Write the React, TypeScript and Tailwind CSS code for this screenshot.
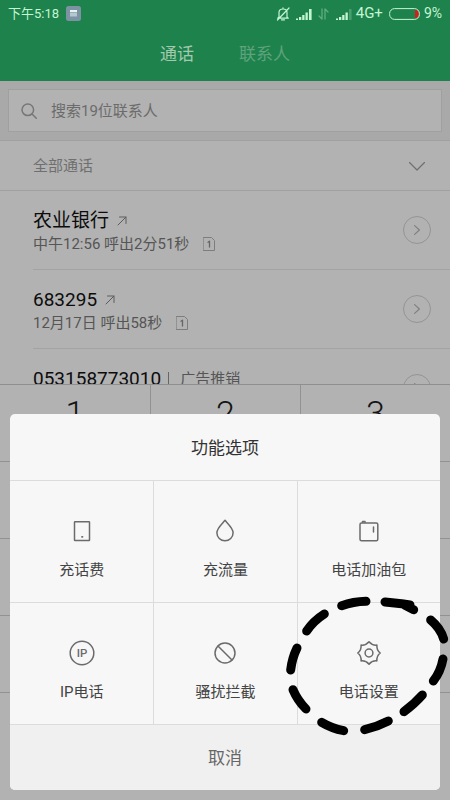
import React from "react";

const stroke = {
  fill: "none",
  stroke: "currentColor",
  strokeLinecap: "round" as const,
  strokeLinejoin: "round" as const,
};

function Signal({ dimLast }: { dimLast?: boolean }) {
  return (
    <svg className="h-[12px] w-[16px]" viewBox="0 0 16 12" fill="currentColor" aria-hidden="true">
      <path d="M0 10.500h2V12H0zM3 9h2.300v3H3zM6.200 7h2.300v5H6.200zM9.500 4.500h2.300V12H9.500z" />
      <path d="M13 1h2.600v11H13z" opacity={dimLast ? 0.25 : 1} />
    </svg>
  );
}

function StatusBar() {
  return (
    <div className="flex h-[27px] items-center px-2 text-[14px] text-[#c4f5d3]">
      <span className="text-[13px]">下午5:18</span>
      <svg className="ml-[7px] h-[15px] w-[15px]" viewBox="0 0 15 15" aria-hidden="true">
        <rect width="15" height="15" rx="2.500" fill="#7b93a2" />
        <path d="M4 4h7v2H4z" fill="#e6f3f3" />
        <path d="M4 6.500h7v4H4z" fill="#b5c8d0" />
      </svg>
      <div className="ml-auto flex items-center">
        <svg className="h-[14px] w-[14px]" viewBox="0 0 14 14" {...stroke} strokeWidth="1.200" aria-hidden="true">
          <path d="M3 10V5.500C3 3.500 4.500 2 7 2s4 1.500 4 3.500V10l1.300 1.200H1.700zM5.500 12.800h3M7 .8V2M13 1 1.500 13" />
        </svg>
        <span className="ml-[6px]"><Signal /></span>
        <svg className="ml-[6px] h-[12px] w-[11px] text-[#5fae7e]" viewBox="0 0 11 12" {...stroke} strokeWidth="1.300" aria-hidden="true">
          <path d="M4 1v10L1 8M7 11V1l3 3" />
        </svg>
        <span className="ml-[7px]"><Signal dimLast /></span>
        <span className="ml-[4px] text-[15px]">4G+</span>
        <svg className="ml-[6px] h-[12px] w-[31px]" viewBox="0 0 31 12" aria-hidden="true">
          <path d="M26 1.500c3 .5 4 2 4 4.500s-1 4-4 4.500z" fill="#d0201c" />
          <rect x=".6" y=".6" width="29.800" height="10.800" rx="5" fill="none" stroke="currentColor" strokeWidth="1" />
        </svg>
        <span className="ml-[4px]">9%</span>
      </div>
    </div>
  );
}

function ArrowOut() {
  return (
    <svg className="h-[10px] w-[10px] text-[#5c5c5c]" viewBox="0 0 10 10" {...stroke} strokeWidth="1" aria-hidden="true">
      <path d="M1 9 9 1M2.500 1H9v6.500" />
    </svg>
  );
}

function Sim() {
  return (
    <svg className="h-[14px] w-[12px] text-[#7d7d7d]" viewBox="0 0 12 14" {...stroke} strokeWidth="1" aria-hidden="true">
      <path d="M.5.5h8l3 3v10H.5z" />
      <path d="M5 5.200l1.500-1V10" stroke="#666" strokeWidth="1.300" />
    </svg>
  );
}

type Call = { name: string; tag?: string; info?: string };

const calls: Call[] = [
  { name: "农业银行", info: "中午12:56 呼出2分51秒" },
  { name: "683295", info: "12月17日 呼出58秒" },
  { name: "053158773010", tag: "广告推销" },
];

function CallRow({ name, tag, info }: Call) {
  return (
    <li className="ml-[33px] flex h-[79px] items-center border-b border-[#a3a3a3] pr-[19px]">
      <div className="flex-1 pt-[4px]">
        <div className="flex h-[24px] items-center text-[19px] leading-[24px] text-[#0c0c0c]">
          <span>{name}</span>
          {tag ? (
            <>
              <span className="ml-[7px] h-[14px] w-px bg-[#666]" />
              <span className="ml-[11px] text-[15px] text-[#555]">{tag}</span>
            </>
          ) : (
            <span className="ml-[8px]"><ArrowOut /></span>
          )}
        </div>
        <div className="flex h-[22px] items-center text-[15px] leading-[22px] text-[#555]">
          {info && (
            <>
              <span>{info}</span>
              <span className="ml-[14px]"><Sim /></span>
            </>
          )}
        </div>
      </div>
      <button type="button" aria-label="详情" className="flex h-[28px] w-[28px] items-center justify-center rounded-full border border-[#949494] text-[#808080]">
        <svg className="h-[10px] w-[6px]" viewBox="0 0 6 10" {...stroke} strokeWidth="1.200" aria-hidden="true">
          <path d="m.6.6 4.800 4.400L.6 9.400" />
        </svg>
      </button>
    </li>
  );
}

const keyRows = [
  ["1", "2", "3"],
  ["", "", ""],
  ["", "", ""],
  ["", "", ""],
];

function Icon({ children }: { children: React.ReactNode }) {
  return (
    <svg className="h-[26px] w-[26px] text-[#6b6b6b]" viewBox="0 0 26 26" {...stroke} strokeWidth="1.500" aria-hidden="true">
      {children}
    </svg>
  );
}

const options = [
  {
    label: "充话费",
    icon: (
      <Icon>
        <rect x="5.500" y="3.800" width="15" height="18.700" rx=".5" />
        <path d="M13 18.800h.5" strokeWidth="1.800" />
      </Icon>
    ),
  },
  {
    label: "充流量",
    icon: (
      <Icon>
        <path d="M13 2.300C10.500 5.500 4.900 10 4.900 14.700a8.100 8.100 0 0 0 16.200 0C21.100 10 15.500 5.500 13 2.300z" />
      </Icon>
    ),
  },
  {
    label: "电话加油包",
    icon: (
      <Icon>
        <rect x="4" y="5" width="17.800" height="17.700" rx="1.500" />
        <path d="M6.500 4.200V3.400h2.500v.8M17.500 9v5" />
      </Icon>
    ),
  },
  {
    label: "IP电话",
    icon: (
      <Icon>
        <circle cx="13" cy="13" r="11.800" />
        <text x="13" y="17" textAnchor="middle" fontSize="11.500" fontWeight="500" fill="currentColor" stroke="none">IP</text>
      </Icon>
    ),
  },
  {
    label: "骚扰拦截",
    icon: (
      <Icon>
        <circle cx="13" cy="13" r="10" />
        <path d="m6 6 14 14" />
      </Icon>
    ),
  },
  {
    label: "电话设置",
    icon: (
      <Icon>
        <path d="M13 1.800Q16.100 5.600 20.900 5.100Q20.400 9.900 24.200 13Q20.400 16.100 20.900 20.900Q16.100 20.400 13 24.200Q9.900 20.400 5.100 20.900Q5.600 16.100 1.800 13Q5.600 9.900 5.100 5.100Q9.900 5.600 13 1.800z" />
        <circle cx="13" cy="13" r="3.900" />
      </Icon>
    ),
  },
];

function HandDrawnRing() {
  return (
    <svg className="pointer-events-none absolute -right-[10px] bottom-[45px] h-[160px] w-[180px] text-black" viewBox="0 0 540 480" {...stroke} strokeWidth="27" aria-hidden="true">
      <path d="M215 62Q250 50 288 49M345 51 395 56 420 60M405 61 431 74M482 105Q512 130 521 162M519 222Q512 260 490 288M457 330Q435 355 402 380M355 408Q320 426 284 434M221 437Q185 430 155 412M108 372Q82 345 69 314M62 255Q66 220 81 189M163 87Q130 108 110 138" />
    </svg>
  );
}

export default function App() {
  return (
    <div className="relative flex h-screen flex-col overflow-hidden bg-[#b2b2b2] font-[Roboto,'Noto_Sans_CJK_SC',sans-serif]">
      <header className="h-[81px] shrink-0 bg-[#1e824c]">
        <StatusBar />
        <nav className="flex h-[54px] items-center justify-center gap-[45px] pt-[2px] text-[17px]">
          <button type="button" className="text-[#a3c9ae]">通话</button>
          <button type="button" className="text-[#5fa37c]">联系人</button>
        </nav>
      </header>

      <div className="shrink-0 border-b border-[#a0a0a0] bg-[#a9a9a9] px-2 py-[8px]">
        <label className="flex h-[43px] items-center border border-[#a0a0a0] bg-[#b2b2b2] pl-[12px]">
          <svg className="h-[16px] w-[16px] text-[#777]" viewBox="0 0 16 16" {...stroke} strokeWidth="1.500" aria-hidden="true">
            <circle cx="6.800" cy="6.800" r="5.800" />
            <path d="m11 11 4.300 4.300" />
          </svg>
          <input
            type="text"
            aria-label="搜索联系人"
            placeholder="搜索19位联系人"
            className="ml-[14px] min-w-0 flex-1 bg-transparent pt-[2px] text-[15px] text-[#555] outline-none placeholder:text-[#6b6b6b]"
          />
        </label>
      </div>

      <main className="min-h-0 flex-1 overflow-hidden">
        <button type="button" className="flex h-[50px] w-full items-center justify-between border-b border-[#a0a0a0] pl-[33px] pr-[25px] pt-[2px] text-[15px] text-[#6f6f6f]">
          <span>全部通话</span>
          <svg className="h-[9px] w-[16px]" viewBox="0 0 16 9" {...stroke} strokeWidth="1.200" aria-hidden="true">
            <path d="m.5.5 7.500 7.500L15.500.5" />
          </svg>
        </button>
        <ul>
          {calls.map((c) => (
            <CallRow key={c.name} {...c} />
          ))}
        </ul>
      </main>

      <div className="h-[416px] shrink-0 border-t border-[#8f8f8f]">
        {keyRows.map((row, r) => (
          <div key={r} className="grid h-[77px] grid-cols-3 border-b border-[#929292]">
            {row.map((k, i) => (
              <div key={i} className="border-l border-[#929292] first:border-l-0">
                {k && (
                  <button type="button" className="w-full pt-[10px] text-[34px] leading-[36px] font-light text-[#151515]">
                    {k}
                  </button>
                )}
              </div>
            ))}
          </div>
        ))}
      </div>

      <section role="dialog" aria-label="功能选项" className="absolute inset-x-[10px] bottom-[10px]">
        <div className="overflow-hidden rounded-[5px] bg-[#f7f7f7] text-[#444]">
          <h2 className="flex h-[66px] items-center justify-center pt-[4px] text-[17px] text-[#333]">功能选项</h2>
          <div className="grid grid-cols-3">
            {options.map((o) => (
              <button
                key={o.label}
                type="button"
                className="flex h-[122px] flex-col items-center border-l border-t border-[#dcdcdc] pt-[37px] text-[15px] leading-[22px] nth-[3n+1]:border-l-0"
              >
                {o.icon}
                <span className="mt-[15px]">{o.label}</span>
              </button>
            ))}
          </div>
          <button type="button" className="h-[66px] w-full border-t border-[#dcdcdc] bg-[#f0f0f0] pt-[2px] text-[17px] text-[#666]">
            取消
          </button>
        </div>
        <HandDrawnRing />
      </section>
    </div>
  );
}
